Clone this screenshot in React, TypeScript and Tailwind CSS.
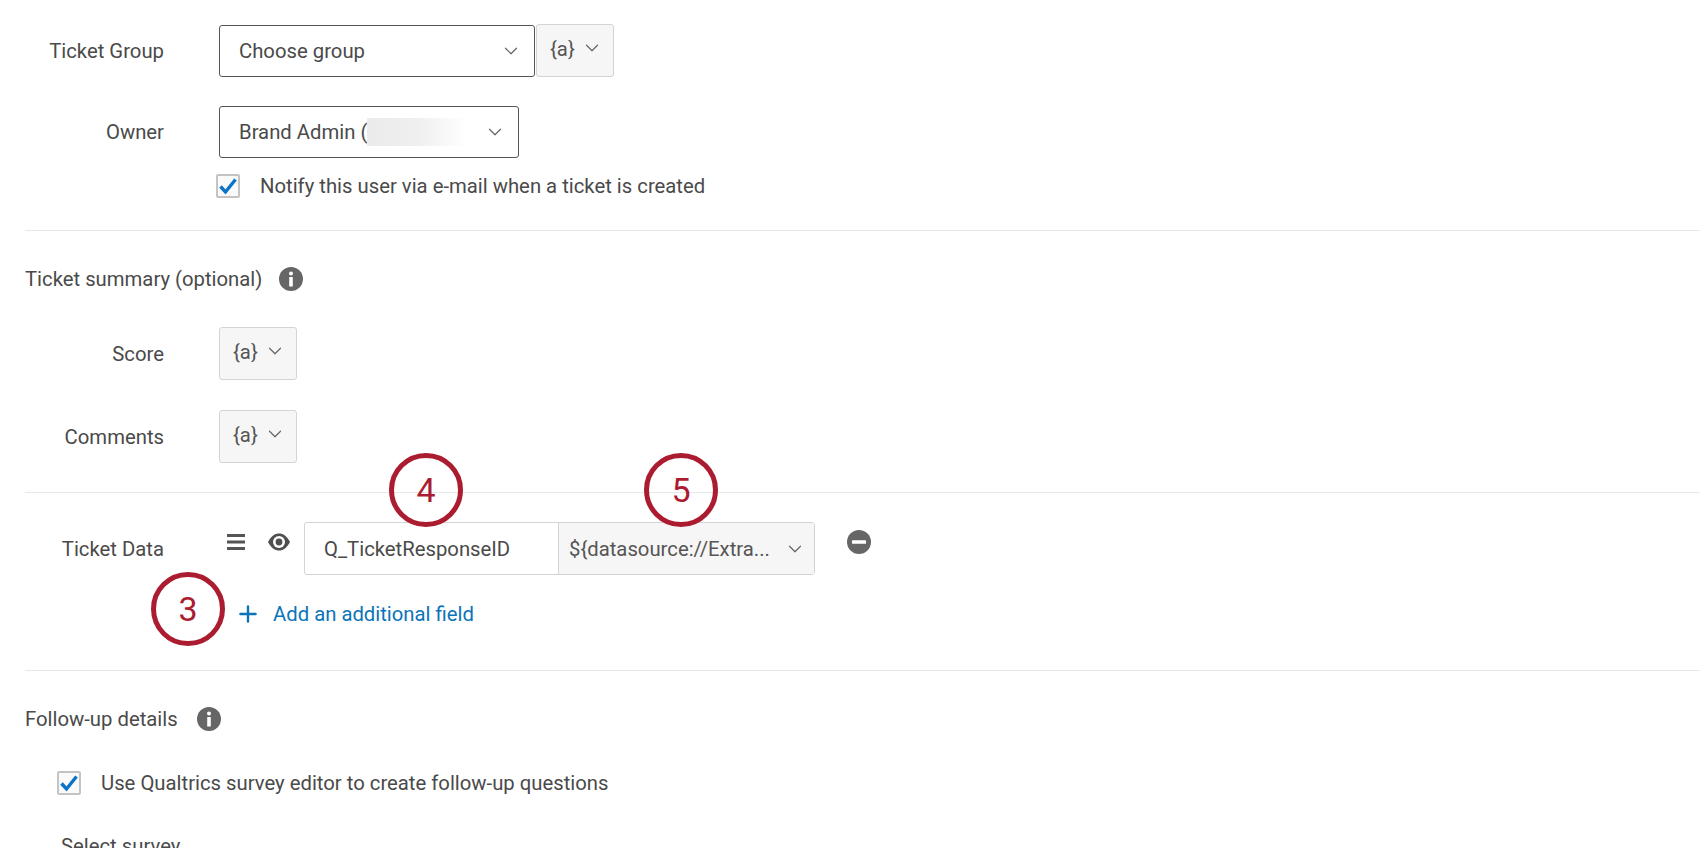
import React from 'react';
import { ChevronDown, Plus } from 'lucide-react';

const Label = ({ children }: { children: React.ReactNode }) => (
  <div className="w-[139px] text-right shrink-0">{children}</div>
);

const Chevron = () => <ChevronDown className="w-[22px] h-[22px] text-[#666] shrink-0" strokeWidth={1.3} />;

const PipedText = ({ className }: { className: string }) => (
  <div className={`h-[53px] flex items-center justify-between pl-[13px] pr-[10px] bg-[#f6f6f6] border border-[#d4d4d4] rounded-[3px] text-[#555] ${className}`}>
    <span className="mb-[3px]">{'{a}'}</span>
    <span className="mb-[5px]"><Chevron /></span>
  </div>
);

const InfoIcon = () => (
  <svg viewBox="0 0 24 24" className="w-6 h-6 shrink-0">
    <circle cx="12" cy="12" r="12" fill="#666" />
    <circle cx="12" cy="6.5" r="2" fill="#fff" />
    <rect x="10.2" y="10" width="3.6" height="9.5" rx="0.6" fill="#fff" />
  </svg>
);

const Check = () => (
  <div className="w-6 h-6 shrink-0 bg-[#fafafa] border-2 border-[#c4c4c4] rounded-[2px] flex items-center justify-center">
    <svg viewBox="0 0 24 24" className="w-[24px] h-[24px] shrink-0">
      <path d="M4.5 12.5 L9.5 18 L19.5 5.5" fill="none" stroke="#0b74c8" strokeWidth="3.4" />
    </svg>
  </div>
);

const Callout = ({ n, className }: { n: number; className: string }) => (
  <div className={`absolute w-[74px] h-[74px] rounded-full border-[5px] border-[#ab1c30] flex items-center justify-center text-[#ab1c30] text-[34px] bg-transparent ${className}`}>
    {n}
  </div>
);

const App = () => {
  return (
    <div className="relative h-[848px] overflow-hidden bg-white text-[20.3px] leading-6 text-[#4a4a4a] font-['Roboto',sans-serif]">
      <div className="pl-[25px] pt-[24px]">
        <div className="flex items-center gap-[55px]">
          <Label>Ticket Group</Label>
          <div className="flex items-center">
            <div className="w-[316px] h-[52px] flex items-center justify-between pl-[19px] pr-[12px] border border-[#555] rounded-[3px]">
              <span>Choose group</span>
              <Chevron />
            </div>
            <PipedText className="w-[78px] h-[52px] ml-px" />
          </div>
        </div>

        <div className="flex items-center gap-[55px] mt-[29px]">
          <Label>Owner</Label>
          <div className="w-[300px] h-[52px] flex items-center justify-between pl-[19px] pr-[12px] border border-[#555] rounded-[3px]">
            <div className="flex items-center">
              <span>Brand Admin (</span>
              <div className="w-[100px] h-[28px] bg-gradient-to-r from-[#ebebeb] via-[#efefef] to-white" />
            </div>
            <Chevron />
          </div>
        </div>

        <div className="flex items-center mt-[16px] ml-[191px] gap-[20px]">
          <Check />
          <span>Notify this user via e-mail when a ticket is created</span>
        </div>

        <div className="h-px bg-[#e8e8e8] mt-[32px]" />

        <div className="flex items-center gap-[17px] mt-[36px]">
          <span>Ticket summary (optional)</span>
          <InfoIcon />
        </div>

        <div className="flex items-center gap-[55px] mt-[36px]">
          <Label>Score</Label>
          <PipedText className="w-[78px]" />
        </div>
        <div className="flex items-center gap-[55px] mt-[30px]">
          <Label>Comments</Label>
          <PipedText className="w-[78px]" />
        </div>

        <div className="h-px bg-[#e8e8e8] mt-[29px]" />

        <div className="flex items-center mt-[29px]">
          <Label>Ticket Data</Label>
          <div className="flex items-center ml-[63px] mb-[14px]">
            <svg viewBox="0 0 18 16" className="w-[18px] h-4 text-[#555]">
              <path d="M0 1.5h18M0 8h18M0 14.5h18" stroke="currentColor" strokeWidth="3" />
            </svg>
          </div>
          <div className="ml-[22px] mb-[14px] mr-[13px]">
            <svg viewBox="0 0 24 24" className="w-[24px] h-[24px]">
              <path d="M1 12C4 6 8 3.5 12 3.5S20 6 23 12C20 18 16 20.5 12 20.5S4 18 1 12Z" fill="#4f4f4f" />
              <circle cx="12" cy="12" r="6" fill="#fff" />
              <circle cx="12" cy="12" r="3.4" fill="#4f4f4f" />
            </svg>
          </div>
          <div className="flex items-center w-[511px] h-[53px] border border-[#d4d4d4] rounded-[3px]">
            <div className="w-[253px] h-full flex items-center pl-[19px] shrink-0">Q_TicketResponseID</div>
            <div className="flex-1 h-full flex items-center justify-between pl-[10px] pr-[8px] bg-[#f6f6f6] border-l border-[#d4d4d4] text-[#555]">
              <span>{'${datasource://Extra...'}</span>
              <Chevron />
            </div>
          </div>
          <svg viewBox="0 0 24 24" className="w-6 h-6 ml-[32px] mb-[14px]">
            <circle cx="12" cy="12" r="12" fill="#666" />
            <rect x="5" y="10.3" width="14" height="3.4" rx="0.5" fill="#fff" />
          </svg>
        </div>

        <div className="flex items-center gap-[12px] mt-[26px] ml-[210px] h-[26px] text-[#0b74b8]">
          <Plus className="w-[26px] h-[26px]" strokeWidth={2.2} />
          <span>Add an additional field</span>
        </div>

        <div className="h-px bg-[#e8e8e8] mt-[43px]" />

        <div className="flex items-center gap-[19px] mt-[36px]">
          <span>Follow-up details</span>
          <InfoIcon />
        </div>

        <div className="flex items-center gap-[20px] mt-[40px] ml-[32px]">
          <Check />
          <span>Use Qualtrics survey editor to create follow-up questions</span>
        </div>

        <div className="mt-[39px] ml-[36px]">Select survey</div>
      </div>

      <Callout n={4} className="left-[389px] top-[453px]" />
      <Callout n={5} className="left-[644px] top-[453px]" />
      <Callout n={3} className="left-[151px] top-[572px]" />
    </div>
  );
};

export default App;
